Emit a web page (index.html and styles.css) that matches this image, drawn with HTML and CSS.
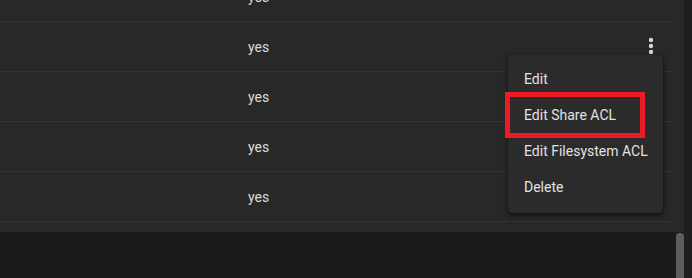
FILE: index.html
```html
<!DOCTYPE html>
<html>
<head>
<meta charset="utf-8">
<link rel="stylesheet" href="styles.css">
</head>
<body>
<div class="page">
  <div class="main">
    <div class="panel">
      <div class="rows">
        <div class="row"><span class="cell">yes</span></div>
        <div class="row"><span class="cell">yes</span>
          <button class="kebab" aria-label="more">
            <svg viewBox="0 0 24 24" width="24" height="24"><circle cx="12" cy="6" r="2.2"/><circle cx="12" cy="12" r="2.2"/><circle cx="12" cy="18" r="2.2"/></svg>
          </button>
        </div>
        <div class="row"><span class="cell">yes</span></div>
        <div class="row"><span class="cell">yes</span></div>
        <div class="row"><span class="cell">yes</span></div>
      </div>
      <div class="menu">
        <div class="item">Edit</div>
        <div class="item">Edit Share ACL</div>
        <div class="item">Edit Filesystem ACL</div>
        <div class="item">Delete</div>
        <div class="highlight"></div>
      </div>
    </div>
    <div class="bottom">
      <div class="fill"></div>
      <div class="thumb"></div>
    </div>
  </div>
  <div class="strip"></div>
</div>
</body>
</html>
```

FILE: styles.css
```css
html, body {
  margin: 0;
  padding: 0;
  background: #1b1b1b;
  font-family: Roboto, "Liberation Sans", sans-serif;
  font-size: 14px;
}
.page {
  display: flex;
  width: 692px;
  height: 278px;
  overflow: hidden;
}
.main {
  width: 684px;
  display: flex;
  flex-direction: column;
}
.panel {
  position: relative;
  height: 232px;
  background: #282828;
  overflow: hidden;
}
.rows {
  margin-top: -28px;
  margin-right: 9px;
}
.row {
  position: relative;
  height: 49px;
  border-bottom: 1px solid #333333;
  display: flex;
  align-items: center;
  padding-left: 248px;
}
.cell {
  color: #dcdcdc;
  line-height: 20px;
  padding-top: 1px;
}
.kebab {
  position: absolute;
  left: 639px;
  top: 12px;
  width: 24px;
  height: 24px;
  padding: 0;
  border: 0;
  background: transparent;
  display: block;
}
.kebab svg {
  display: block;
  fill: #d6d6d6;
}
.menu {
  position: absolute;
  left: 508px;
  top: 55px;
  width: 155px;
  padding: 6px 0 8px;
  background: #2b2b2b;
  border-radius: 4px;
  box-shadow: 0 3px 6px rgba(0, 0, 0, 0.45), 0 1px 3px rgba(0, 0, 0, 0.35);
}
.item {
  height: 36px;
  line-height: 36px;
  padding-left: 16px;
  color: #e2e2e2;
  white-space: nowrap;
}
.highlight {
  position: absolute;
  left: -3px;
  top: 37px;
  width: 130px;
  height: 36px;
  border: 5px solid #ed1c24;
}
.bottom {
  flex: 1;
  display: flex;
  padding-top: 1px;
}
.fill {
  flex: 1;
}
.thumb {
  width: 8px;
  background: #5e5e5e;
  border-radius: 4px 4px 0 0;
}
.strip {
  width: 8px;
  background: #1f1f1f;
}
```
